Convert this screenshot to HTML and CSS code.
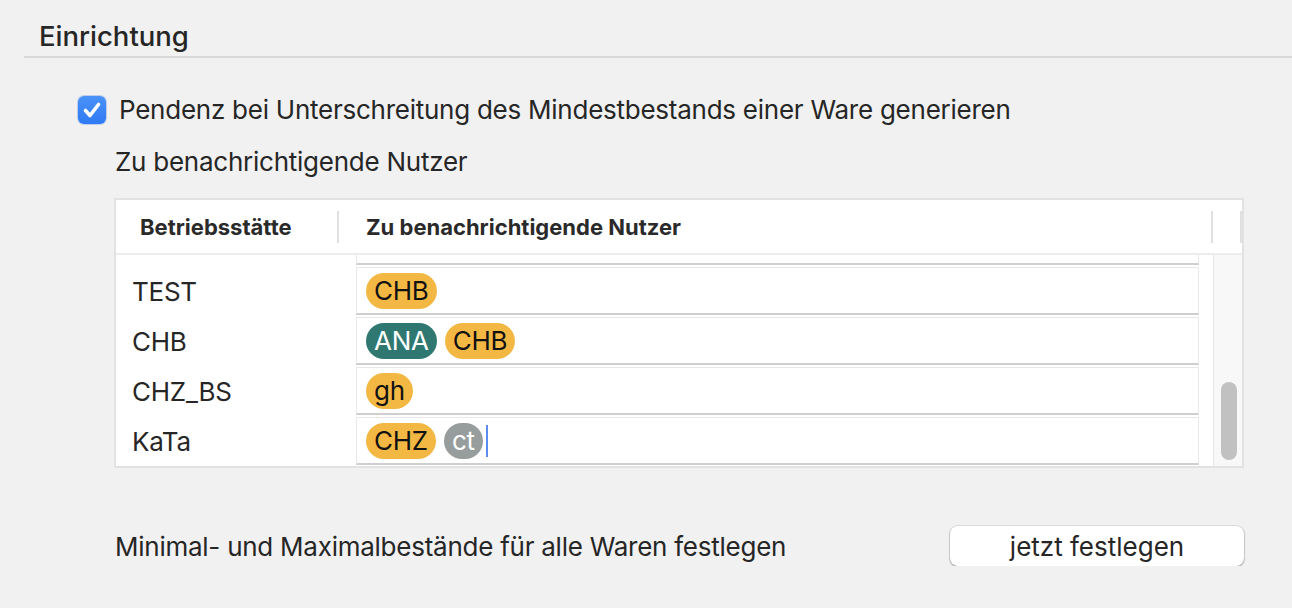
FILE: index.html
```html
<!DOCTYPE html>
<html lang="de">
<head>
<meta charset="utf-8">
<title>Einrichtung</title>
<link rel="stylesheet" href="styles.css">
</head>
<body>
	<div class="section-head">
		<h2>Einrichtung</h2>
	</div>

	<div class="content">
		<label class="check-row">
			<span class="checkbox">
				<svg width="28" height="28" viewBox="0 0 28 28"><path d="M7.5 14.5 L12 19.5 L20.5 8.5" fill="none" stroke="#fff" stroke-width="3.6" stroke-linecap="round" stroke-linejoin="round"/></svg>
			</span>
			<span class="check-label">Pendenz bei Unterschreitung des Mindestbestands einer Ware generieren</span>
		</label>

		<div class="indent">
			<p class="sub-label">Zu benachrichtigende Nutzer</p>

			<div class="table">
				<div class="table-head">
					<div class="th th-site">Betriebsstätte</div>
					<span class="th-divider"></span>
					<div class="th th-users">Zu benachrichtigende Nutzer</div>
					<span class="th-divider"></span>
					<div class="th th-end"></div>
					<span class="th-divider"></span>
				</div>

				<div class="table-body">
					<div class="rows">
						<!-- erste Zeile ist nach oben gescrollt -->
						<div class="row">
							<div class="site"></div>
							<div class="users"></div>
						</div>
						<div class="row">
							<div class="site">TEST</div>
							<div class="users"><span class="tag yellow">CHB</span></div>
						</div>
						<div class="row">
							<div class="site">CHB</div>
							<div class="users"><span class="tag teal">ANA</span><span class="tag yellow">CHB</span></div>
						</div>
						<div class="row">
							<div class="site">CHZ_BS</div>
							<div class="users"><span class="tag yellow">gh</span></div>
						</div>
						<div class="row">
							<div class="site">KaTa</div>
							<div class="users"><span class="tag yellow">CHZ</span><span class="tag gray">ct</span><span class="caret"></span></div>
						</div>
					</div>
					<div class="scrollbar">
						<div class="thumb"></div>
					</div>
				</div>
			</div>

			<div class="bottom-row">
				<span class="bottom-label">Minimal- und Maximalbestände für alle Waren festlegen</span>
				<button class="btn">jetzt festlegen</button>
			</div>
		</div>
	</div>
</body>
</html>
```

FILE: styles.css
```css
* {
	box-sizing: border-box;
}
body {
	margin: 0;
	background: #f1f1f1;
	color: #262626;
	font-family: Inter, "Noto Sans", sans-serif;
	font-size: 26px;
	letter-spacing: -0.25px;
	overflow: hidden;
}
.section-head {
	margin-left: 24px;
	height: 58px;
	border-bottom: 2px solid #d9d9d9;
	padding: 20px 0 0 15px;
}
.section-head h2 {
	margin: 0;
	font-size: 27.5px;
	font-weight: 500;
	letter-spacing: 0;
	line-height: 32px;
}
.content {
	padding-top: 38px;
}
.check-row {
	display: flex;
	align-items: center;
	height: 28px;
	margin-left: 78px;
}
.checkbox {
	width: 28px;
	height: 28px;
	border-radius: 6px;
	background: linear-gradient(#4a92f9, #2f79f4);
	box-shadow: 0 0 0 1px rgba(40, 100, 220, 0.25);
	display: flex;
}
.check-label {
	margin-left: 13px;
	line-height: 32px;
}
.indent {
	margin-left: 114px;
	width: 1130px;
}
.sub-label {
	margin: 22px 0 0 1px;
	line-height: 32px;
}
.table {
	margin-top: 20px;
	border: 2px solid #e2e2e2;
	background: #fff;
}
.table-head {
	display: flex;
	align-items: center;
	height: 55px;
	border-bottom: 2px solid #ececec;
	font-size: 22px;
	font-weight: 700;
	letter-spacing: 0;
	color: #2a2a2a;
}
.th {
	line-height: 30px;
}
.th-site {
	width: 221px;
	padding-left: 24px;
}
.th-users {
	flex: 1;
	padding-left: 27px;
}
.th-end {
	width: 27px;
}
.th-divider {
	width: 2px;
	height: 32px;
	background: #e0e0e0;
}
.table-body {
	display: flex;
	height: 211px;
	overflow: hidden;
}
.rows {
	flex: 1;
	margin-top: -39px;
	padding-right: 14px;
}
.row {
	display: flex;
	height: 50px;
}
.site {
	width: 240px;
	padding-left: 16px;
	display: flex;
	align-items: center;
}
.users {
	flex: 1;
	margin: 1px 0 1px 0;
	border: 1px solid #e8e8e8;
	border-bottom: 2px solid #cfcfcf;
	display: flex;
	align-items: center;
	gap: 8px;
	padding-left: 9px;
}
.tag {
	height: 36px;
	line-height: 36px;
	padding: 0 8px;
	border-radius: 18px;
}
.yellow {
	background: #f3b843;
	color: #111;
}
.teal {
	background: #2f7872;
	color: #fff;
}
.gray {
	background: #979d9d;
	color: #fff;
}
.caret {
	width: 2px;
	height: 32px;
	background: #5b8def;
	margin-left: -5px;
}
.scrollbar {
	width: 29px;
	border-left: 1px solid #e6e6e6;
	background: #f8f8f8;
	position: relative;
}
.thumb {
	position: absolute;
	left: 7px;
	top: 127px;
	width: 16px;
	height: 78px;
	border-radius: 8px;
	background: #c1c1c1;
}
.bottom-row {
	display: flex;
	justify-content: space-between;
	align-items: center;
	margin-top: 58px;
}
.bottom-label {
	margin-left: 1px;
}
.btn {
	width: 294px;
	height: 40px;
	border: none;
	border-radius: 8px;
	background: #fff;
	box-shadow: 0 0 0 1px rgba(0, 0, 0, 0.08), 0 1px 2px rgba(0, 0, 0, 0.35);
	font: inherit;
	color: #262626;
	padding: 0;
}
```
